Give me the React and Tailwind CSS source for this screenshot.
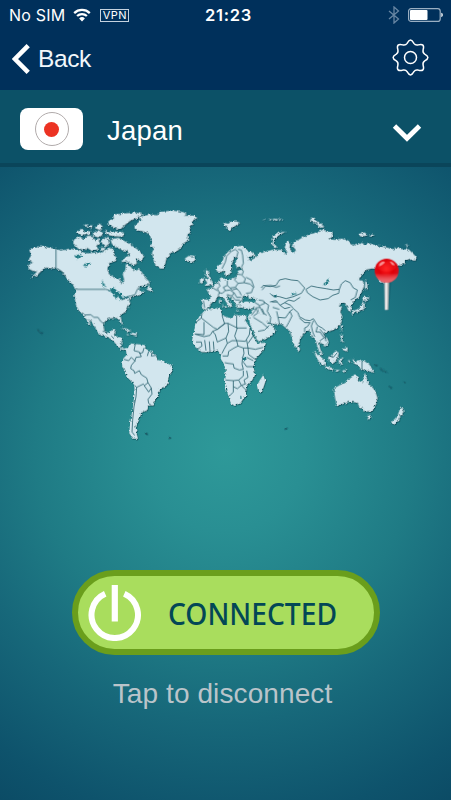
const LAND = '#d2e6ee';
const SEA = '#1d7882';
const EDGE = '#1c5664';

function WorldMap() {
  return (
    <svg className="block h-[245px] w-[410px]" viewBox="60 600 1230 735" role="img" aria-label="World map">
      <defs>
        <filter id="coast" x="-5%" y="-5%" width="110%" height="110%">
          <feTurbulence type="fractalNoise" baseFrequency="0.14" numOctaves="2" seed="4" result="n" />
          <feDisplacementMap in="SourceGraphic" in2="n" scale="11" xChannelSelector="R" yChannelSelector="G" result="d" />
          <feDropShadow in="d" dx="1.5" dy="2" stdDeviation="1.8" floodColor="#032f3c" floodOpacity="0.85" />
        </filter>
        <radialGradient id="ball" cx="0.48" cy="0.42" r="0.6">
          <stop offset="0" stopColor="#ff2222" />
          <stop offset="0.5" stopColor="#e00008" />
          <stop offset="0.85" stopColor="#d80d18" />
          <stop offset="1" stopColor="#c41c25" />
        </radialGradient>
        <linearGradient id="glow" x1="0" y1="0" x2="0" y2="1">
          <stop offset="0.6" stopColor="#ffb0b0" stopOpacity="0" />
          <stop offset="0.95" stopColor="#f0777c" stopOpacity="0.85" />
        </linearGradient>
        <linearGradient id="needle" x1="0" y1="0" x2="1" y2="0">
          <stop offset="0" stopColor="#8f9aa0" />
          <stop offset="0.4" stopColor="#f4f4f4" />
          <stop offset="1" stopColor="#8c8c8c" />
        </linearGradient>
      </defs>

      <g filter="url(#coast)" fill={LAND} strokeLinejoin="round">
        {/* North America */}
        <g transform="translate(60 600)">
          <path d="M28 150L40 143 50 143 62 136 75 141 105 147 125 152 150 146 175 152 200 160 225 158 240 160 262 150 268 142 282 150 276 165 290 172 284 184 268 188 262 205 266 222 285 235 300 238 305 254 313 240 308 222 316 210 318 192 332 200 342 214 352 206 362 212 375 232 388 246 382 256 362 258 350 266 362 266 356 276 372 274 362 284 348 288 340 286 325 300 330 308 322 325 315 335 301 346 306 374 298 364 290 353 265 355 254 364 250 378 254 396 268 399 276 390 288 391 280 405 282 408 295 411 308 413 300 442 310 446 320 446 318 450 304 448 292 438 278 420 262 411 242 405 232 394 222 376 205 354 212 378 204 370 192 344 178 335 168 315 163 285 168 268 155 250 142 238 128 215 110 206 92 204 78 202 66 210 50 226 30 236 52 214 38 212 26 206 25 196 38 188 26 178 34 166Z" />
          <path d="M280 44L315 40 345 38 367 42 350 54 330 62 315 74 300 88 285 84 262 70 270 58 282 60ZM254 92L270 97 285 94 312 98 308 109 280 108 262 104ZM224 84L238 70 248 80 240 90ZM200 82L216 74 214 84ZM162 118L180 110 192 118 202 108 218 108 222 122 234 116 240 128 228 138 235 148 215 152 200 142 195 150 175 146 160 130ZM170 98L184 86 196 96 210 92 208 102 186 106ZM190 78L200 72 202 80ZM218 98L242 92 250 102 236 112 222 108ZM244 118L262 110 270 128 256 140 246 130ZM272 118L295 114 318 126 340 140 354 150 372 168 364 182 348 176 350 190 340 196 322 184 304 186 316 170 330 168 322 152 306 150 290 142 276 132ZM262 160L280 158 286 172 270 176ZM240 144L256 144 250 154Z" />
          <path d="M380 268L386 256 396 268 398 276ZM304 384L320 386 334 394 324 394ZM336 398L350 400 348 406 334 403ZM320 402L328 404 322 406Z" />
          <path fill={EDGE} d="M50 386L56 390 54 392ZM62 394L68 398 62 399Z" />
          <g fill={SEA}>
            <path d="M163 168L182 162 188 170 170 177ZM188 197L204 187 214 190 200 199ZM246 240L252 250 256 262 248 256ZM268 268L284 264 292 276 304 280 308 296 300 300 294 286 288 300 282 284 270 274ZM308 294L326 288 328 292 310 298Z" />
          </g>
        </g>

        {/* Greenland, Iceland, Europe */}
        <g transform="translate(420 600)">
          <path d="M-16 76L4 60 0 50 28 44 52 46 62 36 95 32 128 36 140 42 132 48 160 47 172 53 156 62 158 72 148 78 152 96 142 104 144 122 132 128 125 140 112 152 92 158 78 178 72 205 60 205 46 194 40 176 36 158 44 142 32 140 36 124 30 106 18 96 0 92 -16 86Z" />
          <path d="M134 176L146 168 162 170 167 178 156 186 142 184Z" />
          <path d="M250 68L265 72 272 66 284 64 300 68 288 76 276 82 270 92 258 84 264 78 254 76ZM368 60L376 58 374 63ZM384 58L394 56 392 61ZM400 56L416 58 408 62Z" />
          <path d="M231 214L230 200 244 192 254 166 270 150 285 141 305 138 318 150 338 158 346 168 330 170 322 170 330 182 346 174 358 160 380 154 400 150 400 340 384 352 364 345 346 326 342 322 325 326 302 322 300 308 320 304 345 308 350 296 336 292 328 298 324 286 308 288 306 300 296 306 302 322 292 324 284 306 270 290 260 286 264 300 277 318 268 322 258 304 246 290 234 288 226 302 212 310 206 322 196 328 186 322 186 298 210 300 212 286 200 270 214 264 230 250 240 242 240 230 250 236 266 240 290 230 294 212 312 206 300 202 292 204 286 190 292 174 282 170 280 180 274 194 276 208 266 226 258 228 250 208 244 216Z" />
          <path d="M196 208L208 216 206 226 216 244 218 254 194 258 202 248 196 240 204 234 196 222ZM180 240L192 234 190 248 180 250ZM244 312L254 318 262 320 256 324ZM238 298L242 300 241 312 237 308ZM288 330L300 332 290 334ZM332 328L342 328 334 332Z" />
          <path fill={SEA} d="M372 284L384 278 392 286 388 294 396 304 394 320 386 324 382 308 374 298Z" />
        </g>

        {/* Asia */}
        <g transform="translate(810 600)">
          <path d="M-30 180L-8 155 10 150 34 150 48 164 52 156 44 142 52 122 60 130 58 146 70 160 78 150 66 136 72 126 88 118 105 108 130 100 148 94 160 88 168 95 188 98 186 110 176 118 195 120 215 116 236 122 240 132 256 136 275 129 286 135 300 130 320 138 348 142 372 148 378 142 400 148 416 148 440 172 432 182 418 176 406 182 404 190 388 196 366 192 340 206 336 232 344 250 330 246 320 220 326 206 305 205 290 208 280 218 264 240 278 242 282 258 270 286 256 298 248 306 244 316 244 330 236 334 230 316 222 308 212 312 206 318 216 322 210 334 217 350 214 366 204 380 188 390 166 396 160 404 172 416 176 428 164 440 158 432 146 424 150 446 158 466 150 462 142 438 134 412 126 412 118 390 104 398 90 416 84 440 76 442 66 418 60 392 46 382 34 372 10 372 -16 362 -26 352 -30 300Z" />
          <path d="M4 130L10 110 26 98 48 94 28 104 14 116 10 134 22 140 14 144ZM120 58L132 53 142 64 136 71ZM138 68L152 69 162 80 150 83ZM266 102L284 97 292 106 272 109ZM298 104L314 105 304 110ZM404 136L418 136 410 140ZM6 58L14 56 12 60ZM24 56L38 58 30 60Z" />
          <path d="M286 238L292 250 291 270 285 264ZM281 290L299 292 288 303 279 300ZM285 306L283 325 272 333 256 337 244 345 250 333 268 325 276 311ZM212 374L219 376 215 394ZM83 438L90 446 86 456 81 450Z" />
          <path fill={SEA} d="M160 252L172 242 178 232 177 247 164 257ZM64 282L82 278 68 287ZM12 284L20 284 20 292 12 292Z" />
        </g>

        {/* Arabia */}
        <path transform="translate(300 960)" d="M446 -15L466 -34 488 -12 500 6 510 14 522 20 526 30 518 44 500 54 478 64 470 58 462 38 450 14Z" />

        {/* Africa and South America */}
        <g transform="translate(300 960)">
          <path d="M300 -14L316 -30 360 -37 366 -14 392 -5 404 -15 438 -12 440 -2 434 -2 446 18 456 44 472 70 498 68 490 90 464 120 460 142 465 165 454 184 440 198 438 224 420 250 395 256 388 236 378 205 372 180 378 152 372 132 362 116 364 100 350 90 325 96 305 96 285 80 276 62 282 35 286 10Z" />
          <path d="M490 165L496 184 486 214 475 215 471 196 480 180Z" />
          <path d="M60 80L74 86 84 84 90 70 104 72 130 75 140 88 158 98 168 108 172 120 192 124 216 138 218 152 205 172 202 194 180 208 172 230 158 256 144 256 142 270 124 278 116 302 106 318 112 350 98 352 88 340 90 310 94 290 100 250 104 215 102 190 85 175 75 155 66 135 70 115 80 105 78 90ZM94 344L112 350 114 356 100 356Z" />
          <path fill={EDGE} d="M134 336L143 340 137 344ZM206 349L213 351 209 355Z" />
          <path fill={SEA} d="M428 112L438 112 440 120 430 124ZM420 228L426 230 422 236Z" />
        </g>

        {/* Oceania */}
        <g transform="translate(810 960)">
          <path d="M191 206L208 196 224 190 232 178 244 174 250 166 264 168 262 180 276 188 284 158 290 176 296 192 314 210 322 234 318 252 306 272 285 275 276 264 268 262 264 248 240 244 218 252 200 258 196 236ZM292 285L304 287 300 298 293 296Z" />
          <path d="M130 93L146 105 161 119 168 137 152 132 141 115ZM164 137L190 145 189 151 167 145ZM194 149L213 151 198 155ZM216 152L234 149 220 157ZM174 110L186 108 196 92 206 98 200 122 188 130 178 126ZM206 118L219 113 213 122 219 135 207 130ZM211 44L219 46 217 60 223 69 213 62ZM221 84L233 82 231 94 219 90ZM247 117L258 125 280 121 298 134 312 157 290 151 272 147 263 135 250 129ZM235 118L241 124 236 129Z" />
          <path d="M391 262L404 272 395 286 384 283ZM385 284L391 290 375 314 362 309 375 296Z" />
          <path fill={EDGE} d="M312 132L320 136 316 138ZM328 142L340 150 334 150ZM342 150L350 158 344 156ZM356 198L368 206 360 204ZM400 184L408 188 402 188ZM44 324L50 324 50 328 44 328Z" />
        </g>
      </g>

      {/* Country borders */}
      <g fill="none" stroke={EDGE} strokeWidth="2.3" strokeLinejoin="round">
        <path transform="translate(60 600)" d="M108 147V205L122 212 138 234M168 268H258L270 272M192 345L212 344 222 352 234 352 242 364 250 370M304 300L325 290 345 284 352 268" />
        <g transform="translate(420 600)">
          <path d="M246 206L256 186 260 168 274 154 286 148 294 156 290 172M294 148L304 150 308 166 310 190 304 202M290 208L304 206 310 214 306 226 316 236 312 248 294 250 284 240 286 232M288 222L304 224M312 248L330 252 340 262 334 278 318 280M294 250L286 262 270 264 262 256 262 242M234 246L240 258 232 266 238 278 234 288M262 256L250 262 256 272 246 280 238 278M256 272L270 270 282 278 276 288 260 284M270 264L276 270 290 266 298 274 304 286M282 278L290 292 304 292M276 288L286 300 300 300M286 262L292 268M216 262L232 272M190 302L194 324M318 232L334 240 342 262M345 308L356 314 360 322 346 324M356 300L370 302 374 310 360 316M366 326L372 340 380 346M366 270L376 258 392 256 408 262 420 258M396 306L412 306M398 322L418 328" />
          <path d="M350 326L334 346M360 322L372 344M354 328L352 340 340 348M340 352L356 362 366 368 384 384" />
        </g>
        <g transform="translate(810 600)">
          <path d="M-26 264L-20 256 0 260 18 256 28 240 46 236 64 240 84 242 104 264 94 280 70 290 48 296 28 290 8 288 0 280M108 268L124 258 142 262 168 266 190 270 208 268 206 280 188 286 174 296 150 300 128 290 112 278ZM208 268L214 252 226 242 240 248 250 264 262 270 256 292 242 300M0 306L18 302 30 316 44 308 62 316 70 326 84 338 88 350 106 360 120 362 130 356 142 376 156 384 166 392M20 334L24 352 46 354 60 334 68 328M24 352L28 370M60 334L66 348 56 368 48 382M88 354L104 368 120 368 112 380 104 384 104 396M130 362L124 378 128 396 134 410M142 380L138 396 150 396 162 414 150 422M150 388L164 406 168 424M44 308L56 300 72 304 90 292M30 316L44 326 60 322M-18 306L-4 316 -8 334 2 352 0 370" />
        </g>
        <g transform="translate(300 960)">
          <path d="M306 -20L304 -6 286 8M304 -6L340 22 352 28 374 12 366 -14M312 6V44L286 42M284 42L312 50 330 46 338 34 352 28 374 10 384 10 412 24M410 -14V24L440 24M412 24L404 48 410 62 436 64 448 44 450 26M384 10L386 34 378 54 352 66 346 44 338 34M378 54L382 70 372 88 366 100M382 70L396 62 410 62 414 78 402 84 386 94 384 108 368 108M414 78L430 84 444 84 440 60M444 84L466 88 490 82M444 84L446 104 466 118M430 84L432 100 428 112 426 132 430 148 418 150 402 144 400 132 384 130 374 128M440 112L460 122M430 126L440 140 462 140M376 180L400 182 400 216 388 228M400 182L416 180 430 168 430 152M416 180L424 196 436 192 432 180 444 172 440 152M400 200L412 206 424 196M424 196L436 208 440 216M314 60L318 92M328 64L330 94M340 64L342 90M288 66L304 66 306 78 294 86M474 34L494 30 508 16M462 44L444 70" />
          <path d="M106 72L102 92 118 96 124 110 108 112 104 124 94 136 92 146 102 152 104 160M72 118L86 122 94 112 106 124M132 84L128 98 118 100M146 94L142 108M156 98L154 108 168 106M104 160L118 152 124 164 140 174 144 188 134 196 130 192 110 202 104 196M144 188L154 204 146 216 132 196M154 204L156 222 144 238 146 250 154 256M110 202L108 230 102 260 98 300 96 336 104 346" />
          <path d="M8 34L16 34 22 42M34 48L42 56" />
        </g>
        <path transform="translate(810 960)" d="M276 124V148M176 108L190 112 202 98" />
      </g>

      {/* Location pin */}
      <g>
        <path d="M1162 840L1174 840 1166 932 1158 932Z" fill="#063c4a" opacity="0.25" />
        <path d="M1152 838H1168L1165 930H1154Z" fill="url(#needle)" />
        <circle cx="1160" cy="812" r="36" fill="url(#ball)" />
        <circle cx="1160" cy="812" r="36" fill="url(#glow)" />
        <path d="M1132 804C1133 782 1147 779 1158 785C1172 777 1187 784 1188 803C1178 817 1145 819 1132 804Z" fill="#ff3030" opacity="0.3" />
        <path d="M1138 792C1144 783 1152 782 1155 787C1149 794 1142 798 1137 799ZM1169 785C1177 784 1183 790 1184 796L1176 795Z" fill="#ffb9b9" opacity="0.75" />
      </g>
    </svg>
  );
}

function StatusBar() {
  return (
    <div className="flex h-[30px] items-center text-white">
      <div className="flex flex-1 items-center pl-[9px]">
        <span className="font-['Inter'] text-[16px] leading-none tracking-[0.2px]">No SIM</span>
        <svg className="ml-[8px] h-[14px] w-[18px]" viewBox="0 0 18 14" fill="none" stroke="#fff" strokeWidth="2.3">
          <path d="M1.2 5.1a11.2 11.2 0 0 1 15.6 0M4.1 8a7.1 7.1 0 0 1 9.8 0" />
          <path d="M9 13.4l-2.9-2.9a4.1 4.1 0 0 1 5.800 0z" fill="#fff" stroke="none" />
        </svg>
        <span className="ml-[9px] flex h-[13px] w-[29px] items-center justify-center border border-[#c5d2df] font-['Inter'] text-[11px] leading-none tracking-[0.4px]">VPN</span>
      </div>
      <span className="pl-[5px] font-['Inter'] text-[16.5px] font-semibold leading-none tracking-[0.7px]">21:23</span>
      <div className="flex flex-1 items-center justify-end pr-[8px]">
        <svg className="h-[18px] w-[12px]" viewBox="0 0 12 18" fill="none" stroke="#6886a3" strokeWidth="1.3">
          <path d="M1 5l9.5 8L6 17V1l4.500 4L1 13" />
        </svg>
        <svg className="ml-[8px] h-[14px] w-[35px]" viewBox="0 0 35 14">
          <rect x="0.600" y="0.600" width="31.600" height="12.800" rx="2.500" fill="none" stroke="#9aafc2" strokeWidth="1.200" />
          <rect x="2" y="2" width="17.500" height="10" rx="1" fill="#fff" />
          <path d="M33.300 4.800c2 .6 2 3.800 0 4.400z" fill="#fff" />
        </svg>
      </div>
    </div>
  );
}

export default function App() {
  return (
    <div className="flex h-[800px] w-[451px] flex-col overflow-hidden bg-[#0d5069] font-['Liberation_Sans',sans-serif]">
      <header className="h-[90px] bg-[#00305b] text-white">
        <StatusBar />
        <div className="flex h-[60px] items-start justify-between pl-[12px] pr-[22px]">
          <button className="flex items-center pt-[14px]">
            <svg className="h-[30px] w-[18px]" viewBox="0 0 18 30" fill="none" stroke="#fff" strokeWidth="4.600">
              <path d="M16.200 1.700L3 15l13.200 13.300" />
            </svg>
            <span className="ml-[8px] text-[24.5px] leading-[30px] tracking-[-0.4px] text-[#f2f7fb]">Back</span>
          </button>
          <svg className="mt-[9px] h-[37px] w-[37px]" viewBox="0 0 37 37" fill="none" stroke="#fff" strokeWidth="1.500" strokeLinejoin="round">
            <path d="M15.100 4.300Q18.500-2.100 21.900 4.300Q23.300 6.500 26.100 5.900Q33.200 3.800 31.100 10.900Q30.500 13.700 32.700 15.100Q39.100 18.500 32.700 21.900Q30.500 23.300 31.100 26.100Q33.200 33.200 26.100 31.100Q23.300 30.500 21.900 32.700Q18.500 39.100 15.100 32.700Q13.700 30.500 10.900 31.100Q3.800 33.200 5.900 26.100Q6.500 23.300 4.300 21.900Q-2.100 18.500 4.300 15.100Q6.500 13.700 5.900 10.900Q3.800 3.800 10.900 5.900Q13.700 6.500 15.100 4.300Z" />
            <circle cx="18.500" cy="18.500" r="6" />
          </svg>
        </div>
      </header>

      <button className="flex h-[77px] w-full items-center border-b-[4px] border-[#0a455a] bg-[#0c5167] pb-0 pl-[20px] pr-[29px]">
        <span className="mt-[5px] flex h-[42px] w-[63px] items-center justify-center rounded-[8px] bg-white">
          <span className="flex h-[34px] w-[34px] items-center justify-center rounded-full border border-[#b1abab]">
            <span className="h-[15px] w-[15px] rounded-full bg-[#ec3323]" />
          </span>
        </span>
        <span className="ml-[24px] mt-[8px] flex-1 text-left text-[27.5px] leading-[32px] tracking-[0.2px] text-white">Japan</span>
        <svg className="mt-[12px] h-[19px] w-[30px]" viewBox="0 0 30 19" fill="none" stroke="#fff" strokeWidth="4.800">
          <path d="M2.500 3L15 15.300 27.500 3" />
        </svg>
      </button>

      <main className="flex flex-1 flex-col items-center bg-[radial-gradient(circle_at_225px_285px,#2e9999_0px,#298f93_80px,#1f7b85_190px,#17687a_270px,#0e536c_370px,#09445f_460px)]">
        <div className="mt-[33px] w-full pl-[20px]">
          <WorldMap />
        </div>
        <button className="ml-[1px] mt-[125px] flex h-[85px] w-[308px] items-center rounded-full border-[6px] border-[#6a9e1c] bg-[#a9dd5d] pl-[10px]">
          <svg className="h-[57px] w-[54px]" viewBox="0 0 54 57" fill="none" stroke="#fff">
            <path d="M17.200 9.700A23.200 23.200 0 1 0 36.300 9.700" strokeWidth="6" />
            <path d="M26.800 1V37.500" strokeWidth="6.200" />
          </svg>
          <span className="ml-[26px] mt-[2px] origin-left scale-x-[0.91] font-['Noto_Sans'] text-[31px] font-medium leading-none text-[#034756]">CONNECTED</span>
        </button>
        <p className="mt-[23px] pr-[6px] text-[28px] leading-[32px] tracking-[0.1px] text-[#bac4ca]">Tap to disconnect</p>
      </main>
    </div>
  );
}
